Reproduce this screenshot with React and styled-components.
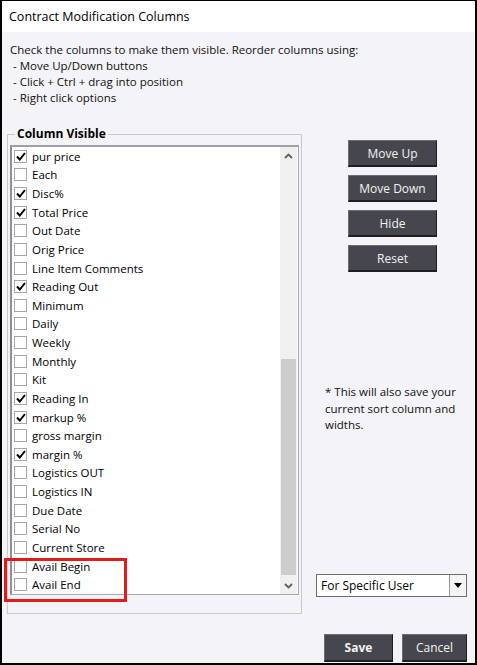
import React from 'react';
import styled, { createGlobalStyle } from 'styled-components';

const GlobalStyle = createGlobalStyle`
  html, body {
    margin: 0;
    padding: 0;
    background: #ffffff;
  }
  * {
    box-sizing: border-box;
  }
`;

const Window = styled.div`
  position: relative;
  width: 477px;
  height: 665px;
  border: 2px solid #000;
  border-top-width: 1px;
  background: #f4f3f7;
  font-family: 'Open Sans', 'Noto Sans', sans-serif;
  font-size: 11.5px;
  color: #111;
  display: flex;
  flex-direction: column;
`;

const TitleBar = styled.div`
  height: 31px;
  background: #fff;
  padding: 7px 0 0 7px;
  font-size: 12.5px;
  color: #000;
`;

const Instructions = styled.div`
  padding: 10px 0 0 8px;
  line-height: 16px;
  white-space: pre;
`;

const Main = styled.div`
  display: flex;
  margin-top: 21px;
  padding-left: 5px;
`;

const GroupBox = styled.fieldset`
  width: 295px;
  height: 487px;
  margin: 0;
  padding: 4px 2px 0 2px;
  border: 1px solid #c9c9cc;
  display: flex;
  flex-direction: column;
`;

const Legend = styled.legend`
  font-weight: 700;
  font-size: 12px;
  color: #000;
  padding: 0 2px;
  margin-left: 5px;
  line-height: 14px;
`;

const ListBox = styled.div`
  height: 450px;
  display: flex;
  background: #fff;
  border: 1px solid #a9a9ad;
  border-left: 2px solid #8f8f94;
  border-top: 2px solid #a0a0a5;
`;

const Items = styled.div`
  flex: 1;
  display: flex;
  flex-direction: column;
  padding-left: 2px;
`;

const Item = styled.div`
  height: 18.65px;
  display: flex;
  align-items: center;
  gap: 5px;
  color: #000;
  white-space: nowrap;
`;

const Box = styled.span`
  width: 13px;
  height: 13px;
  border: 1px solid #a7a7a7;
  background: #fff;
  display: flex;
  align-items: center;
  justify-content: center;
  flex-shrink: 0;
`;

const ScrollBar = styled.div`
  width: 17px;
  margin-right: 1px;
  background: #f0f0f0;
  display: flex;
  flex-direction: column;
`;

const Arrow = styled.div`
  height: 17px;
  display: flex;
  align-items: center;
  justify-content: center;
  color: #606060;
`;

const Track = styled.div`
  flex: 1;
  display: flex;
  flex-direction: column;
  padding-top: ${({ $offset }) => $offset}px;
  padding-bottom: 2px;
`;

const Thumb = styled.div`
  flex: 1;
  margin: 0 1px;
  background: #cdcdcd;
`;

const Side = styled.div`
  flex: 1;
  display: flex;
  flex-direction: column;
  padding: 13px 0 17px 46px;
`;

const ButtonStack = styled.div`
  display: flex;
  flex-direction: column;
  gap: 8px;
`;

const DarkButton = styled.button`
  width: ${({ $w }) => $w}px;
  height: ${({ $h }) => $h || 27}px;
  background: #46474e;
  color: #f2f2f2;
  font-family: 'Open Sans', 'Noto Sans', sans-serif;
  font-size: 12px;
  font-weight: ${({ $bold }) => ($bold ? 700 : 400)};
  border: 1px solid #1e1e22;
  border-top-color: #6b6c72;
  border-left-color: #6b6c72;
  border-bottom-width: 2px;
  padding: 0;
  cursor: pointer;
`;

const Note = styled.div`
  margin-top: 112px;
  margin-left: -23px;
  line-height: 16.5px;
  color: #111;
`;

const Select = styled.div`
  margin-top: auto;
  margin-left: -32px;
  width: 151px;
  height: 23px;
  background: #fff;
  border: 1px solid #6e6e6e;
  display: flex;
  align-items: center;
  font-size: 12px;
  color: #000;
`;

const SelectText = styled.span`
  flex: 1;
  padding-left: 4px;
`;

const DropButton = styled.span`
  width: 17px;
  height: 100%;
  border-left: 1px solid #9a9a9a;
  background: #f4f4f4;
  display: flex;
  align-items: center;
  justify-content: center;
`;

const Footer = styled.div`
  display: flex;
  justify-content: flex-end;
  gap: 9px;
  padding-right: 8px;
  margin-top: 20px;
`;

const Highlight = styled.div`
  position: absolute;
  left: 2px;
  top: 557px;
  width: 123px;
  height: 44px;
  border: 3px solid #e21b1b;
  pointer-events: none;
`;

const columns = [
  ['pur price', true],
  ['Each', false],
  ['Disc%', true],
  ['Total Price', true],
  ['Out Date', false],
  ['Orig Price', false],
  ['Line Item Comments', false],
  ['Reading Out', true],
  ['Minimum', false],
  ['Daily', false],
  ['Weekly', false],
  ['Monthly', false],
  ['Kit', false],
  ['Reading In', true],
  ['markup %', true],
  ['gross margin', false],
  ['margin %', true],
  ['Logistics OUT', false],
  ['Logistics IN', false],
  ['Due Date', false],
  ['Serial No', false],
  ['Current Store', false],
  ['Avail Begin', false],
  ['Avail End', false],
];

const Check = () => (
  <svg width="10" height="9" viewBox="0 0 10 9">
    <path d="M1 4.5 L3.8 7.5 L9 1" fill="none" stroke="#000" strokeWidth="2" />
  </svg>
);

const Chevron = ({ down }) => (
  <svg width="9" height="6" viewBox="0 0 9 6">
    <path
      d={down ? 'M1 1 L4.5 4.5 L8 1' : 'M1 5 L4.5 1.5 L8 5'}
      fill="none"
      stroke="#606060"
      strokeWidth="1.8"
    />
  </svg>
);

const App = () => {
  return (
    <>
      <GlobalStyle />
      <Window>
        <TitleBar>Contract Modification Columns</TitleBar>
        <Instructions>
          {'Check the columns to make them visible. Reorder columns using:\n'}
          {' - Move Up/Down buttons\n'}
          {' - Click + Ctrl + drag into position\n'}
          {' - Right click options'}
        </Instructions>
        <Main>
          <GroupBox>
            <Legend>Column Visible</Legend>
            <ListBox>
              <Items>
                {columns.map(([name, on]) => (
                  <Item key={name}>
                    <Box>{on && <Check />}</Box>
                    {name}
                  </Item>
                ))}
              </Items>
              <ScrollBar>
                <Arrow><Chevron /></Arrow>
                <Track $offset={195}>
                  <Thumb />
                </Track>
                <Arrow><Chevron down /></Arrow>
              </ScrollBar>
            </ListBox>
          </GroupBox>
          <Side>
            <ButtonStack>
              <DarkButton $w={89}>Move Up</DarkButton>
              <DarkButton $w={89}>Move Down</DarkButton>
              <DarkButton $w={89}>Hide</DarkButton>
              <DarkButton $w={89}>Reset</DarkButton>
            </ButtonStack>
            <Note>
              * This will also save your
              <br />
              current sort column and
              <br />
              widths.
            </Note>
            <Select>
              <SelectText>For Specific User</SelectText>
              <DropButton>
                <svg width="8" height="5" viewBox="0 0 8 5">
                  <path d="M0 0 L8 0 L4 5 Z" fill="#000" />
                </svg>
              </DropButton>
            </Select>
          </Side>
        </Main>
        <Footer>
          <DarkButton $w={69} $h={28} $bold>Save</DarkButton>
          <DarkButton $w={65} $h={28}>Cancel</DarkButton>
        </Footer>
        <Highlight />
      </Window>
    </>
  );
};

export default App;
